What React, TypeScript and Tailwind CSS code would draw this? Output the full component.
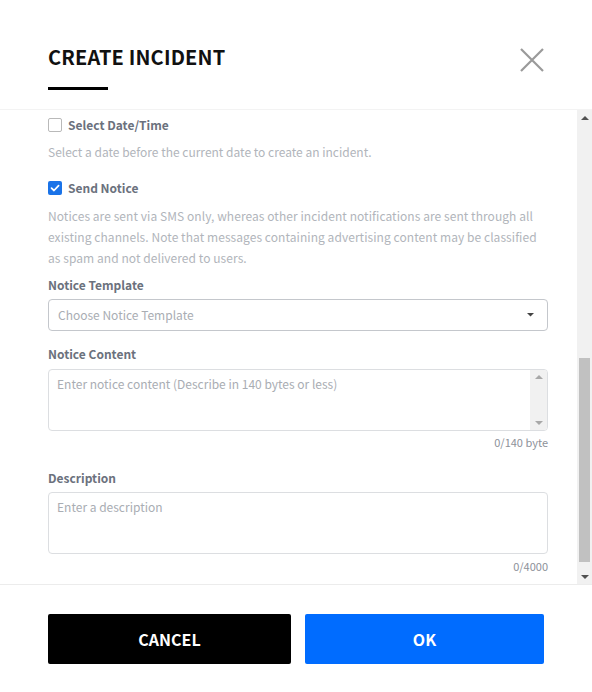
import React from 'react';

function Checkbox({ checked }: { checked?: boolean }) {
  if (checked) {
    return (
      <span className="w-[14px] h-[14px] rounded-[2px] bg-[#1a73e8] flex items-center justify-center">
        <svg width="10" height="10" viewBox="0 0 10 10" fill="none">
          <path d="M1.5 5.2 L4 7.5 L8.6 2.6" stroke="#fff" strokeWidth="1.7" strokeLinecap="round" strokeLinejoin="round" />
        </svg>
      </span>
    );
  }
  return <span className="w-[14px] h-[14px] rounded-[2px] border border-[#b9b9b9] bg-white" />;
}

function Arrow({ up, color, size = 5 }: { up?: boolean; color: string; size?: number }) {
  return (
    <svg width={size * 2} height={size} viewBox="0 0 10 5">
      <path d={up ? 'M0 5 L5 0 L10 5 Z' : 'M0 0 L10 0 L5 5 Z'} fill={color} />
    </svg>
  );
}

export default function App() {
  return (
    <div
      className="w-[592px] h-[692px] bg-white flex flex-col overflow-hidden"
      style={{ fontFamily: '"Noto Sans CJK KR", "Source Sans Pro", "Noto Sans", sans-serif' }}
    >
      {/* Header */}
      <div className="h-[110px] shrink-0 px-12 pt-[42px] flex justify-between border-b border-[#f3f3f3]">
        <div>
          <h1 className="text-[20px] leading-[30px] font-bold text-[#111] tracking-[0.15px]">CREATE INCIDENT</h1>
          <div className="mt-[15px] w-[60px] h-[3px] bg-black" />
        </div>
        <button className="w-[28px] h-[28px] mt-[4px] -mr-[2px] flex items-center justify-center">
          <svg width="26" height="26" viewBox="0 0 26 26">
            <path d="M2 2 L24 24 M24 2 L2 24" stroke="#9a9a9a" strokeWidth="2.2" />
          </svg>
        </button>
      </div>

      {/* Scroll area */}
      <div className="h-[475px] shrink-0 flex border-b border-[#ececec]">
        <div className="flex-1 pl-12 pr-[29px] pt-[5px] text-[12px]">
          <label className="flex items-center gap-[6px] h-[20px]">
            <Checkbox />
            <span className="font-bold text-[#6b717d]">Select Date/Time</span>
          </label>
          <p className="mt-[7px] leading-[20px] text-[#b1b5bb]">Select a date before the current date to create an incident.</p>

          <label className="mt-[16px] flex items-center gap-[6px] h-[20px]">
            <Checkbox checked />
            <span className="font-bold text-[#6b717d]">Send Notice</span>
          </label>
          <p className="mt-[7px] leading-[21px] text-[#b1b5bb] tracking-[0.06px]">
            Notices are sent via SMS only, whereas other incident notifications are sent through all existing channels. Note that messages containing advertising content may be classified as spam and not delivered to users.
          </p>

          <div className="mt-[7px] leading-[20px] font-bold text-[#6b717d]">Notice Template</div>
          <div className="mt-[4px] h-[32px] rounded-[4px] border border-[#c4c7cc] flex items-center justify-between pl-[9px] pr-[13px]">
            <span className="text-[#a9adb3]">Choose Notice Template</span>
            <Arrow color="#444" size={3.5} />
          </div>

          <div className="mt-[13px] leading-[20px] font-bold text-[#6b717d]">Notice Content</div>
          <div className="mt-[5px] h-[62px] rounded-[4px] border border-[#dcdee1] flex overflow-hidden">
            <div className="flex-1 pl-[8px] pt-[4px] leading-[20px] text-[#a9adb3]">
              Enter notice content (Describe in 140 bytes or less)
            </div>
            <div className="w-[17px] bg-[#f1f1f1] flex flex-col items-center justify-between py-[5px]">
              <Arrow up color="#a8a8a8" size={4} />
              <Arrow color="#a8a8a8" size={4} />
            </div>
          </div>
          <div className="mt-[1px] leading-[20px] text-right text-[11px] text-[#8d9199]">0/140 byte</div>

          <div className="mt-[16px] leading-[20px] font-bold text-[#6b717d]">Description</div>
          <div className="mt-[4px] h-[62px] rounded-[4px] border border-[#dcdee1] pl-[8px] pt-[4px] leading-[20px] text-[#a9adb3]">
            Enter a description
          </div>
          <div className="mt-[2px] leading-[20px] text-right text-[11px] text-[#8d9199]">0/4000</div>
        </div>

        {/* Scrollbar */}
        <div className="w-[15px] bg-[#f1f1f1] flex flex-col">
          <div className="h-[15px] flex items-center justify-center">
            <Arrow up color="#505050" size={4} />
          </div>
          <div className="flex-1 flex flex-col px-[2px]">
            <div className="h-[233px]" />
            <div className="h-[204px] bg-[#c1c1c1]" />
          </div>
          <div className="h-[15px] flex items-center justify-center">
            <Arrow color="#505050" size={4} />
          </div>
        </div>
      </div>

      {/* Footer */}
      <div className="flex-1 px-12 pt-[29px] flex gap-[14px]">
        <button className="w-[243px] h-[50px] rounded-[2px] bg-black text-white font-bold text-[16px]">CANCEL</button>
        <button className="w-[239px] h-[50px] rounded-[2px] bg-[#006cff] text-white font-bold text-[16px]">OK</button>
      </div>
    </div>
  );
}
